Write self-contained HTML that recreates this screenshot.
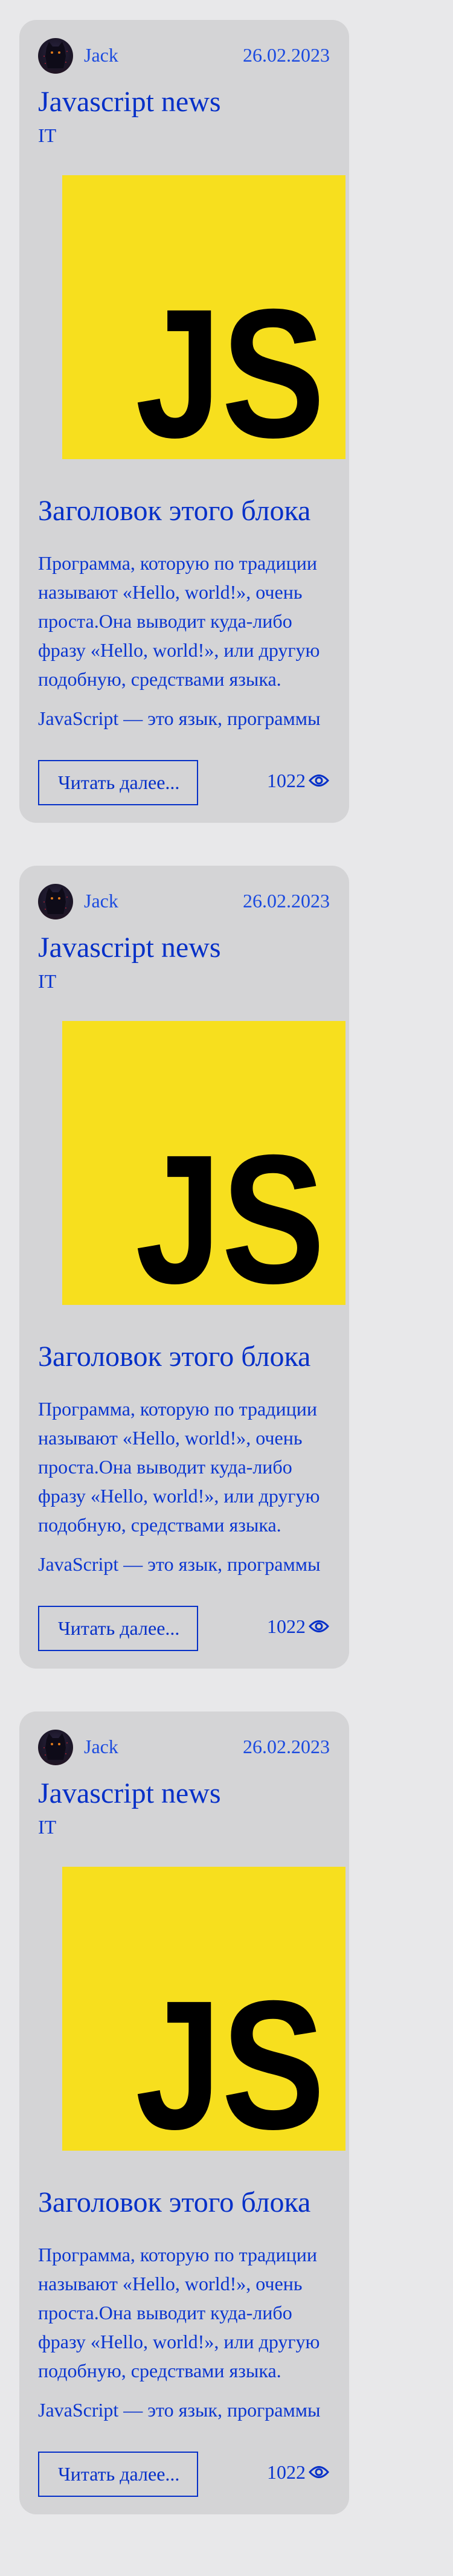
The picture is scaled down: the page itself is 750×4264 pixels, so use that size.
<!DOCTYPE html>
<html><head><meta charset="utf-8"><style>
*{margin:0;padding:0;box-sizing:border-box}
body{width:750px;height:4264px;background:#e8e8ea;font-family:"Liberation Serif","Noto Serif CJK SC",serif;color:#0b36d0;position:relative;overflow:hidden}
.card{position:absolute;left:32px;width:546px;height:1329px;background:#d4d4d6;border-radius:28px}
.card>*{position:absolute;white-space:nowrap}
.av{left:31px;top:30px;width:58px;height:59px;border-radius:50%;background:radial-gradient(circle at 50% 40%,#2a2440 0%,#1b1628 55%,#2a1420 100%);overflow:hidden}
.t32{font-size:32px;line-height:32px}
.jack{left:107px;top:42px;color:#1a4ae0}
.date{right:32px;top:42px;color:#1a4ae0}
.title{left:31px;top:112px;font-size:48px;line-height:48px;color:#0630c8}
.it{left:31px;top:175px}
.img{left:71px;top:257px;width:469px;height:470px;background:#f7df1e}
.h{left:31px;top:789px;font-size:48px;line-height:48px;color:#0630c8}
.p{left:31px;top:875px;font-size:32px;line-height:48px}
.js{left:31px;top:1132px;font-size:32px;line-height:48px}
.btn{left:31px;top:1225px;width:265px;height:75px;border:2px solid #0630c8;font-size:32px;line-height:71px;padding-left:31px;color:#0630c8}
.cnt{right:72px;top:1243px}
.eye{left:479px;top:1246px}
</style></head><body>

<div class="card" style="top:33px">
<div class="av"><svg width="58" height="59" viewBox="0 0 58 59"><path d="M14 16 L18 6 L24 14 L34 14 L40 6 L44 16 L46 30 L42 50 L16 50 L12 30Z" fill="#0e0b18"/><circle cx="23" cy="24" r="2" fill="#e07a1a"/><circle cx="35" cy="24" r="2" fill="#e07a1a"/><circle cx="10" cy="30" r="1" fill="#a02030"/><circle cx="48" cy="22" r="1" fill="#a02030"/><circle cx="46" cy="40" r="1" fill="#a02030"/><circle cx="12" cy="42" r="1" fill="#a02030"/></svg></div>
<div class="t32 jack">Jack</div>
<div class="t32 date">26.02.2023</div>
<div class="title">Javascript news</div>
<div class="t32 it">IT</div>
<div class="img"><svg width="469" height="470"><text x="121" y="433" font-family="Liberation Sans,sans-serif" font-weight="bold" font-size="304" textLength="314" lengthAdjust="spacingAndGlyphs" fill="#000">JS</text></svg></div>
<div class="h">Заголовок этого блока</div>
<div class="p">Программа, которую по традиции<br>называют «Hello, world!», очень<br>проста.Она выводит куда-либо<br>фразу «Hello, world!», или другую<br>подобную, средствами языка.</div>
<div class="js">JavaScript — это язык, программы</div>
<div class="btn">Читать далее...</div>
<div class="t32 cnt">1022</div>
<svg class="eye" width="34" height="26" viewBox="0 0 34 26"><path d="M2 13 Q17 -4 32 13 Q17 30 2 13Z" fill="none" stroke="#0630c8" stroke-width="3"/><circle cx="17" cy="13" r="5" fill="none" stroke="#0630c8" stroke-width="3"/></svg>
</div>

<div class="card" style="top:1433px">
<div class="av"><svg width="58" height="59" viewBox="0 0 58 59"><path d="M14 16 L18 6 L24 14 L34 14 L40 6 L44 16 L46 30 L42 50 L16 50 L12 30Z" fill="#0e0b18"/><circle cx="23" cy="24" r="2" fill="#e07a1a"/><circle cx="35" cy="24" r="2" fill="#e07a1a"/><circle cx="10" cy="30" r="1" fill="#a02030"/><circle cx="48" cy="22" r="1" fill="#a02030"/><circle cx="46" cy="40" r="1" fill="#a02030"/><circle cx="12" cy="42" r="1" fill="#a02030"/></svg></div>
<div class="t32 jack">Jack</div>
<div class="t32 date">26.02.2023</div>
<div class="title">Javascript news</div>
<div class="t32 it">IT</div>
<div class="img"><svg width="469" height="470"><text x="121" y="433" font-family="Liberation Sans,sans-serif" font-weight="bold" font-size="304" textLength="314" lengthAdjust="spacingAndGlyphs" fill="#000">JS</text></svg></div>
<div class="h">Заголовок этого блока</div>
<div class="p">Программа, которую по традиции<br>называют «Hello, world!», очень<br>проста.Она выводит куда-либо<br>фразу «Hello, world!», или другую<br>подобную, средствами языка.</div>
<div class="js">JavaScript — это язык, программы</div>
<div class="btn">Читать далее...</div>
<div class="t32 cnt">1022</div>
<svg class="eye" width="34" height="26" viewBox="0 0 34 26"><path d="M2 13 Q17 -4 32 13 Q17 30 2 13Z" fill="none" stroke="#0630c8" stroke-width="3"/><circle cx="17" cy="13" r="5" fill="none" stroke="#0630c8" stroke-width="3"/></svg>
</div>

<div class="card" style="top:2833px">
<div class="av"><svg width="58" height="59" viewBox="0 0 58 59"><path d="M14 16 L18 6 L24 14 L34 14 L40 6 L44 16 L46 30 L42 50 L16 50 L12 30Z" fill="#0e0b18"/><circle cx="23" cy="24" r="2" fill="#e07a1a"/><circle cx="35" cy="24" r="2" fill="#e07a1a"/><circle cx="10" cy="30" r="1" fill="#a02030"/><circle cx="48" cy="22" r="1" fill="#a02030"/><circle cx="46" cy="40" r="1" fill="#a02030"/><circle cx="12" cy="42" r="1" fill="#a02030"/></svg></div>
<div class="t32 jack">Jack</div>
<div class="t32 date">26.02.2023</div>
<div class="title">Javascript news</div>
<div class="t32 it">IT</div>
<div class="img"><svg width="469" height="470"><text x="121" y="433" font-family="Liberation Sans,sans-serif" font-weight="bold" font-size="304" textLength="314" lengthAdjust="spacingAndGlyphs" fill="#000">JS</text></svg></div>
<div class="h">Заголовок этого блока</div>
<div class="p">Программа, которую по традиции<br>называют «Hello, world!», очень<br>проста.Она выводит куда-либо<br>фразу «Hello, world!», или другую<br>подобную, средствами языка.</div>
<div class="js">JavaScript — это язык, программы</div>
<div class="btn">Читать далее...</div>
<div class="t32 cnt">1022</div>
<svg class="eye" width="34" height="26" viewBox="0 0 34 26"><path d="M2 13 Q17 -4 32 13 Q17 30 2 13Z" fill="none" stroke="#0630c8" stroke-width="3"/><circle cx="17" cy="13" r="5" fill="none" stroke="#0630c8" stroke-width="3"/></svg>
</div>

</body></html>
